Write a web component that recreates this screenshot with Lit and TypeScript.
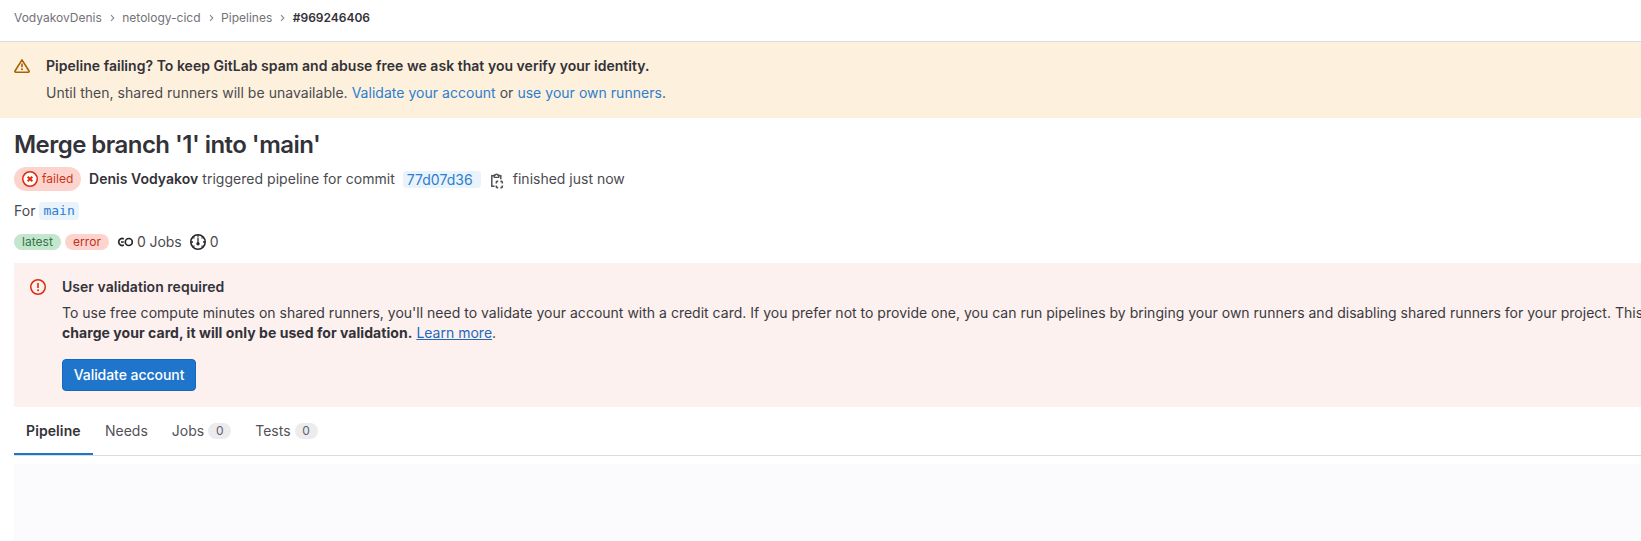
import { LitElement, html, css, svg } from "lit";
import { customElement } from "lit/decorators.js";

const chevron = html`<svg class="chev" width="5" height="8" viewBox="0 0 5 8" fill="none" stroke="#89888d" stroke-width="1.1"><path d="M1 1.2 3.8 4 1 6.8"/></svg>`;

const icon = (body: unknown, cls = "") =>
  html`<svg class="icon ${cls}" width="16" height="16" viewBox="0 0 16 16" fill="none">${body}</svg>`;

const warning = svg`<path d="M8 1.9 15 13a.8.8 0 0 1-.7 1.2H1.7A.8.8 0 0 1 1 13L8 1.9Z" stroke="currentColor" stroke-width="1.6" stroke-linejoin="round"/><path d="M8 5.6v3.7" stroke="currentColor" stroke-width="1.6"/><circle cx="8" cy="11.3" r="1" fill="currentColor"/>`;
const failed = svg`<circle cx="8" cy="8" r="7.25" fill="#fff" stroke="currentColor" stroke-width="1.5"/><path d="m5.7 5.7 4.6 4.6m0-4.6-4.6 4.6" stroke="currentColor" stroke-width="2"/>`;
const errorIcon = svg`<circle cx="8" cy="8" r="7.25" stroke="currentColor" stroke-width="1.5"/><path d="M8 4v5" stroke="currentColor" stroke-width="1.6"/><circle cx="8" cy="11.2" r="1" fill="currentColor"/>`;
const copy = svg`<path d="M5.5 13.3H2.8V2.7H5M10 2.7h1.8v3.6" stroke="currentColor" stroke-width="1.5"/><path d="M5.3 4.4V2h1.1a1.15 1.15 0 0 1 2.2 0h1.1v2.4Z" stroke="currentColor" stroke-width="1.3"/><path d="M7.3 10.4V9.3q0-.9.9-.9h1M11.4 8.4h1q.9 0 .9.9v1.1M13.3 12.6v1.1q0 .9-.9.9h-1M9.2 14.6h-1q-.9 0-.9-.9v-1.1" stroke="currentColor" stroke-width="1.6"/>`;
const link = svg`<path d="M6.8 4.9A3.5 3.5 0 1 0 6.8 11.1M4 8h2.8" stroke="currentColor" stroke-width="1.7"/><circle cx="11.8" cy="8" r="3.5" stroke="currentColor" stroke-width="1.7"/>`;
const gauge = svg`<circle cx="8" cy="8" r="7.2" stroke="currentColor" stroke-width="1.6"/><path d="M8 3.5v6M8 1v1.8M1 8h2M13 8h2M3.4 3.4l1 1M12.6 3.4l-1 1M3.4 12.6l1-1M12.6 12.6l-1-1" stroke="currentColor" stroke-width="1.3"/><circle cx="8" cy="9.7" r="1.7" fill="currentColor"/>`;

@customElement("app-root")
export class AppRoot extends LitElement {
  static styles = css`
    :host { display: block; width: 1641px; height: 541px; overflow: hidden; background: #fff; color: #4b4a50;
      font: 14px/20px Inter, "Noto Sans", sans-serif; letter-spacing: 0.03px; }
    * { box-sizing: border-box; }
    .icon { display: block; flex: none; }
    .crumbs { display: flex; align-items: center; height: 42px; padding: 0 14px 6px; border-bottom: 1px solid #dcdcde;
      font-size: 12px; line-height: 16px; color: #737278; letter-spacing: 0; }
    .chev { margin: 0 7.5px 0 8px; }
    .crumbs strong { color: #333238; font-weight: 600; }
    .warn { display: flex; gap: 16px; height: 76px; padding: 14px; background: #fdf1dd; }
    .warn .icon { color: #ab6100; margin-top: 2px; }
    .heading { color: #333238; font-weight: 600; }
    .warn .line { margin-top: 7px; }
    .link { color: #2c7ecf; }
    .main { padding-left: 14px; }
    .title { margin: 0; height: 49px; padding-top: 11px; font-size: 24px; line-height: 32px; font-weight: 600; color: #333238; letter-spacing: -0.54px; }
    .row { display: flex; align-items: center; white-space: pre; }
    .status { height: 24px; }
    .failed { display: flex; align-items: center; gap: 4px; width: 67px; height: 24px; padding-left: 8px; border-radius: 12px;
      background: #fdd4cd; color: #c9341c; font-size: 12px; }
    .failed .icon { color: #dd2b0e; }
    .by { margin-left: 8px; }
    .by strong { font-weight: 600; color: #333238; }
    .sha { width: 78px; height: 17px; line-height: 17px; padding-left: 4px; margin-left: 8px; border-radius: 4px; background: #e9f3fc; color: #2c7ecf; }
    .copy { color: #535158; margin: 3px 0 0 8px; }
    .fin { margin-left: 8px; letter-spacing: 0; }
    .ref { height: 20px; margin-top: 10px; }
    .code { width: 40px; height: 18px; line-height: 18px; margin-left: 4px; padding-left: 4px; border-radius: 4px; background: #e9f3fc; color: #2c7ecf;
      font-family: "DejaVu Sans Mono", monospace; font-size: 13px; letter-spacing: 0; }
    .tags { height: 20px; margin-top: 11px; }
    .pill { height: 16px; line-height: 16px; border-radius: 8px; font-size: 12px; text-align: center; }
    .ok { width: 47px; background: #c3e6cd; color: #34744a; }
    .bad { width: 44px; margin-left: 4px; background: #fdd4cd; color: #bd301a; }
    .dark { color: #28272d; margin: 0 4px 0 8px; }
    .jobs { letter-spacing: -0.08px; }
    .danger { display: flex; gap: 16px; height: 144px; margin-top: 11px; padding: 14px 0 0 16px; background: #fcf1ef; color: #3b3a40; }
    .danger .icon { color: #dd2b0e; margin-top: 2px; }
    .copytext { margin-top: 6px; white-space: nowrap; letter-spacing: 0.008px; }
    .copytext strong { font-weight: 700; color: #333238; letter-spacing: 0.05px; }
    .learn { color: #1f68bd; text-decoration: underline; }
    .btn { width: 134px; height: 32px; margin-top: 16px; padding: 0; border: 1px solid #1068bf; border-radius: 4px; background: #1f75cb; color: #fff;
      font: 500 14px/20px Inter, sans-serif; letter-spacing: -0.05px; display: block; }
    .tabs { display: flex; height: 49px; border-bottom: 1px solid #dcdcde; letter-spacing: 0; }
    .tab { display: flex; height: 48px; padding: 14px 12px 0; color: #535158; }
    .tab.on { width: 79px; font-weight: 600; letter-spacing: 0.1px; color: #333238; border-bottom: 2px solid #1f75cb; }
    .n { width: 23px; height: 16px; margin: 2px 0 0 4px; border-radius: 8px; background: #ececef; font-size: 12px; line-height: 16px; text-align: center; color: #626168; }
    .canvas { height: 77px; margin-top: 8px; background: #fbfafd; }
  `;

  render() {
    return html`
      <nav class="crumbs"><span>VodyakovDenis</span>${chevron}<span>netology-cicd</span>${chevron}<span>Pipelines</span>${chevron}<strong>#969246406</strong></nav>
      <section class="warn">${icon(warning)}
        <div><div class="heading">Pipeline failing? To keep GitLab spam and abuse free we ask that you verify your identity.</div>
          <div class="line">Until then, shared runners will be unavailable. <span class="link">Validate your account</span> or <span class="link">use your own runners</span>.</div></div>
      </section>
      <main class="main">
        <h1 class="title">Merge branch '1' into 'main'</h1>
        <div class="row status"><span class="failed">${icon(failed)}<span>failed</span></span><span class="by"><strong>Denis Vodyakov</strong> triggered pipeline for commit</span><span class="sha">77d07d36</span>${icon(copy, "copy")}<span class="fin">finished just now</span></div>
        <div class="row ref"><span>For</span><span class="code">main</span></div>
        <div class="row tags"><span class="pill ok">latest</span><span class="pill bad">error</span>${icon(link, "dark")}<span class="jobs">0 Jobs</span>${icon(gauge, "dark")}<span>0</span></div>
        <section class="danger">${icon(errorIcon)}
          <div><div class="heading">User validation required</div>
            <div class="copytext">To use free compute minutes on shared runners, you'll need to validate your account with a credit card. If you prefer not to provide one, you can run pipelines by bringing your own runners and disabling shared runners for your project. This<br><strong>charge your card, it will only be used for validation.</strong> <span class="learn">Learn more</span>.</div>
            <button class="btn">Validate account</button></div>
        </section>
        <div class="tabs"><div class="tab on">Pipeline</div><div class="tab">Needs</div><div class="tab">Jobs<span class="n">0</span></div><div class="tab">Tests<span class="n">0</span></div></div>
        <div class="canvas"></div>
      </main>`;
  }
}
